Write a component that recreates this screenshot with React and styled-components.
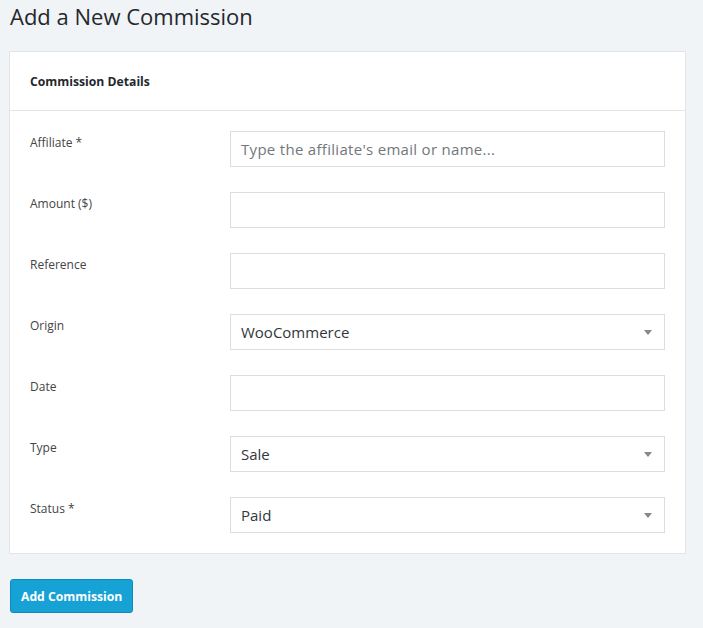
import React from "react";
import styled, { createGlobalStyle } from "styled-components";

const Global = createGlobalStyle`
  html, body { margin: 0; padding: 0; background: #f1f4f7; }
  body { font-family: "Open Sans", "Noto Sans", sans-serif; color: #32373c; }
  * { box-sizing: border-box; }
`;

const Page = styled.div`
  padding: 1px 17px 16px 9px;
  width: 703px;
`;

const Title = styled.h1`
  margin: 0 0 0 1px;
  font-size: 22px;
  font-weight: 400;
  line-height: 30px;
  color: #23282d;
`;

const Card = styled.div`
  margin-top: 20px;
  background: #fff;
  border: 1px solid #e2e4e7;
`;

const CardHeader = styled.div`
  height: 59px;
  padding: 0 20px;
  display: flex;
  align-items: center;
  border-bottom: 1px solid #e5e5e5;
  font-size: 12.2px;
  font-weight: 700;
  color: #23282d;
`;

const CardBody = styled.div`
  padding: 20px;
  display: flex;
  flex-direction: column;
  gap: 25px;
`;

const Row = styled.div`
  display: grid;
  grid-template-columns: 200px 1fr;
  align-items: start;
`;

const Label = styled.label`
  font-size: 12px;
  color: #444;
  padding-top: 3px;
  line-height: 18px;
`;

const Field = styled.div`
  position: relative;
  height: 36px;
  border: 1px solid #ddd;
  background: #fff;
  display: flex;
  align-items: center;
  padding: 0 10px;
  font-size: 15px;
  color: ${(p) => (p.$placeholder ? "#72777c" : "#32373c")};
  letter-spacing: ${(p) => (p.$placeholder ? "0.3px" : "0")};
`;

const Caret = styled.span`
  position: absolute;
  right: 12px;
  top: 50%;
  margin-top: -2px;
  width: 0;
  height: 0;
  border-left: 4px solid transparent;
  border-right: 4px solid transparent;
  border-top: 5px solid #888;
`;

const Button = styled.button`
  margin-top: 25px;
  margin-left: 1px;
  height: 34px;
  padding: 0 10px;
  background: #17a2d6;
  border: 1px solid #0e8ac0;
  border-radius: 3px;
  color: #fff;
  font-family: "Open Sans", sans-serif;
  font-size: 12.2px;
  font-weight: 700;
  cursor: pointer;
`;

const rows = [
  { label: "Affiliate *", value: "Type the affiliate's email or name...", placeholder: true },
  { label: "Amount ($)" },
  { label: "Reference" },
  { label: "Origin", value: "WooCommerce", select: true },
  { label: "Date" },
  { label: "Type", value: "Sale", select: true },
  { label: "Status *", value: "Paid", select: true },
];

export default function App() {
  return (
    <>
      <Global />
      <Page>
        <Title>Add a New Commission</Title>
        <Card>
          <CardHeader>Commission Details</CardHeader>
          <CardBody>
            {rows.map((r) => (
              <Row key={r.label}>
                <Label>{r.label}</Label>
                <Field $placeholder={r.placeholder}>
                  {r.value}
                  {r.select && <Caret />}
                </Field>
              </Row>
            ))}
          </CardBody>
        </Card>
        <Button>Add Commission</Button>
      </Page>
    </>
  );
}
